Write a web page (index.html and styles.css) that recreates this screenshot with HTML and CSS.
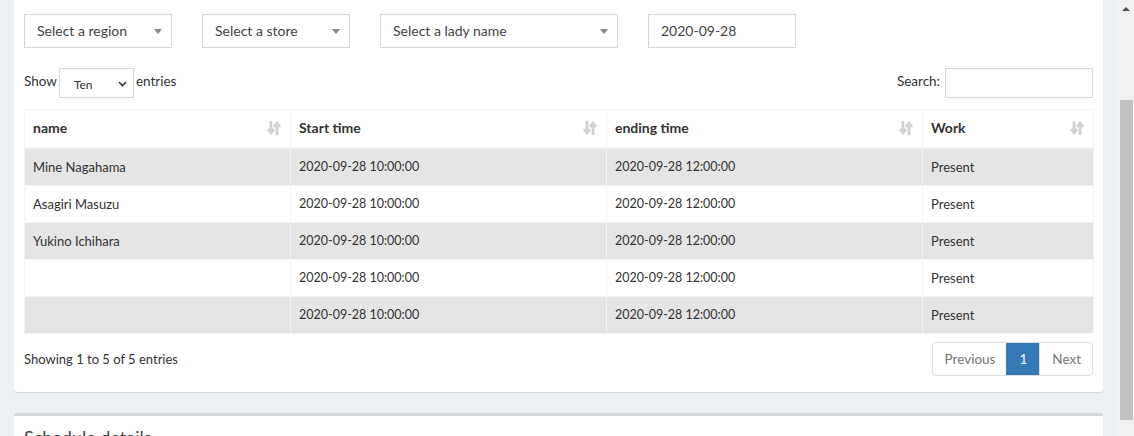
FILE: index.html
```html
<!DOCTYPE html>
<html>
<head>
<meta charset="utf-8">
<link rel="stylesheet" href="styles.css">
</head>
<body>
<div class="page">
  <main class="content">
    <section class="box">
      <div class="filters">
        <div class="sel2 w-sm"><span>Select a region</span><b class="caret"></b></div>
        <div class="sel2 w-sm"><span>Select a store</span><b class="caret"></b></div>
        <div class="sel2 w-lg"><span>Select a lady name</span><b class="caret"></b></div>
        <div class="date-input">2020-09-28</div>
      </div>
      <div class="controls">
        <div class="length"><span class="lbl">Show</span>
          <div class="mini-select"><span>Ten</span>
            <svg width="9" height="6" viewBox="0 0 9 6"><path d="M1 1l3.5 3.5L8 1" fill="none" stroke="#333" stroke-width="1.6"/></svg>
          </div>
          <span class="lbl">entries</span></div>
        <div class="search"><span class="lbl">Search:</span> <div class="search-input"></div></div>
      </div>
      <table class="data">
        <colgroup><col class="c1"><col class="c2"><col class="c3"><col class="c4"></colgroup>
        <thead>
          <tr>
            <th>name<svg class="sort" viewBox="0 0 14 16"><path d="M4 1v11M1 9l3 4 3-4M10 15V4M7 7l3-4 3 4" fill="none" stroke="#d2d2d2" stroke-width="2.8"/></svg></th>
            <th>Start time<svg class="sort" viewBox="0 0 14 16"><path d="M4 1v11M1 9l3 4 3-4M10 15V4M7 7l3-4 3 4" fill="none" stroke="#d2d2d2" stroke-width="2.8"/></svg></th>
            <th>ending time<svg class="sort" viewBox="0 0 14 16"><path d="M4 1v11M1 9l3 4 3-4M10 15V4M7 7l3-4 3 4" fill="none" stroke="#d2d2d2" stroke-width="2.8"/></svg></th>
            <th>Work<svg class="sort" viewBox="0 0 14 16"><path d="M4 1v11M1 9l3 4 3-4M10 15V4M7 7l3-4 3 4" fill="none" stroke="#d2d2d2" stroke-width="2.8"/></svg></th>
          </tr>
        </thead>
        <tbody>
          <tr><td>Mine Nagahama</td><td class="t">2020-09-28 10:00:00</td><td class="t">2020-09-28 12:00:00</td><td>Present</td></tr>
          <tr><td>Asagiri Masuzu</td><td class="t">2020-09-28 10:00:00</td><td class="t">2020-09-28 12:00:00</td><td>Present</td></tr>
          <tr><td>Yukino Ichihara</td><td class="t">2020-09-28 10:00:00</td><td class="t">2020-09-28 12:00:00</td><td>Present</td></tr>
          <tr><td></td><td class="t">2020-09-28 10:00:00</td><td class="t">2020-09-28 12:00:00</td><td>Present</td></tr>
          <tr><td></td><td class="t">2020-09-28 10:00:00</td><td class="t">2020-09-28 12:00:00</td><td>Present</td></tr>
        </tbody>
      </table>
      <div class="footer">
        <div class="info">Showing 1 to 5 of 5 entries</div>
        <div class="pager">
          <span class="pg disabled">Previous</span>
          <span class="pg active">1</span>
          <span class="pg disabled">Next</span>
        </div>
      </div>
    </section>
    <section class="box box-top">
      <h3 class="box-title">Schedule details</h3>
    </section>
  </main>
  <div class="scrollbar">
    <div class="sb-arrow"></div>
    <div class="sb-thumb"></div>
  </div>
</div>
</body>
</html>
```
FILE: styles.css
```css
* { box-sizing: border-box; }
html, body { margin: 0; padding: 0; height: 100%; overflow: hidden; }
body {
  background: #ecf0f5;
  font-family: Lato, "Liberation Sans", sans-serif;
  font-size: 14px;
  color: #333;
}
.page { display: flex; height: 436px; }
.content { flex: 1; padding: 0 14px; min-width: 0; }
.box {
  background: #fff;
  border-radius: 0 0 3px 3px;
  box-shadow: 0 1px 1px rgba(0,0,0,0.1);
  padding: 14px 10px 16px;
  margin-bottom: 21px;
}
.filters { display: flex; gap: 30px; margin-bottom: 20px; }
.sel2, .date-input {
  height: 34px;
  border: 1px solid #d2d6de;
  display: flex;
  align-items: center;
  padding: 0 12px 2px;
  color: #444;
  font-size: 14px;
}
.sel2 { justify-content: space-between; padding-right: 9px; }
.w-sm { width: 148px; }
.w-lg { width: 238px; }
.date-input { width: 148px; }
.caret {
  width: 0; height: 0;
  border-left: 4px solid transparent;
  border-right: 4px solid transparent;
  border-top: 5px solid #888;
  margin-top: 2px;
}
.controls { display: flex; justify-content: space-between; align-items: center; height: 30px; margin-bottom: 11px; }
.length, .search { display: flex; align-items: center; gap: 5px; color: #333; }
.length { gap: 2px; }
.lbl { font-size: 13.5px; margin-top: -4px; }
.mini-select {
  width: 75px; height: 30px;
  border: 1px solid #d2d6de;
  display: flex; align-items: center; justify-content: space-between;
  padding: 3px 6px 0 14px;
  font-size: 12px;
  color: #333;
}
.mini-select svg { margin-top: -2px; }
.search-input { width: 148px; height: 30px; border: 1px solid #d2d6de; }
.data {
  width: 100%;
  border-collapse: collapse;
  table-layout: fixed;
  border: 1px solid #f4f4f4;
}
.c1 { width: 266px; } .c2 { width: 316px; } .c3 { width: 316px; } .c4 { width: 171px; }
.data th, .data td {
  border: 1px solid #f4f4f4;
  padding: 8px;
  line-height: 20px;
  text-align: left;
  height: 37px;
}
.data th {
  font-weight: 700;
  position: relative;
  border-bottom-width: 2px;
  height: 38px;
  padding-top: 8px;
  padding-bottom: 8px;
}
.data td { font-size: 13px; color: #333; }
.data td.t { font-size: 12.5px; }
.data tbody tr:nth-child(odd) td { background: #e5e5e5; }
.sort { position: absolute; right: 9px; top: 10px; width: 14px; height: 16px; }
.footer { display: flex; justify-content: space-between; align-items: center; margin-top: 8px; }
.info { font-size: 13px; margin-top: 0; }
.pager { display: flex; border: 1px solid #ddd; border-radius: 4px; height: 34px; overflow: hidden; }
.pg { padding: 0 11px 0 12px; line-height: 32px; color: #777; font-size: 13.5px; }
.pg + .pg { border-left: 1px solid #ddd; }
.pg.active { background: #337ab7; color: #fff; border-color: #337ab7; padding: 0 12px; }
.box-top { border-top: 3px solid #d2d6de; border-radius: 3px 3px 0 0; padding: 10px 10px; height: 60px; }
.box-title { margin: 0; font-size: 18px; font-weight: 400; color: #444; line-height: 1; padding-top: 2px; }
.scrollbar { width: 17px; background: #f1f1f1; display: flex; flex-direction: column; align-items: center; flex: none; }
.sb-arrow {
  margin-top: 7px;
  width: 0; height: 0;
  border-left: 4px solid transparent;
  border-right: 4px solid transparent;
  border-bottom: 4px solid #505050;
}
.sb-thumb { margin-top: 89px; width: 13px; height: 320px; background: #c1c1c1; margin-left: 2px; }
```
